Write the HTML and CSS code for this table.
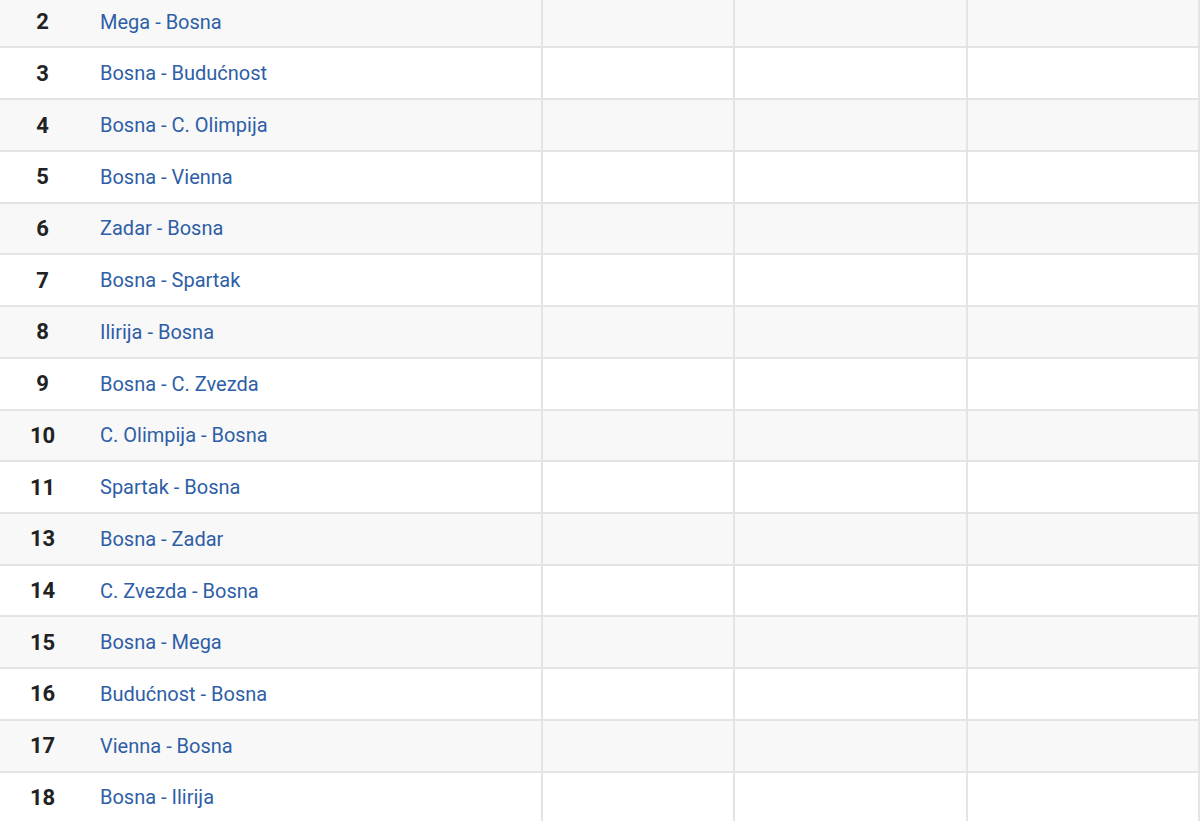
FILE: index.html
```html
<!DOCTYPE html>
<html lang="bs">
<head>
<meta charset="utf-8">
<title>Raspored</title>
<link rel="stylesheet" href="styles.css">
</head>
<body>
<table class="schedule">
  <colgroup>
    <col class="c-num"><col class="c-match"><col class="c-a"><col class="c-b"><col class="c-c">
  </colgroup>
  <tbody>
    <tr><td class="num">2</td><td class="match"><a href="#">Mega - Bosna</a></td><td class="cell"></td><td class="cell"></td><td class="cell"></td></tr>
    <tr><td class="num">3</td><td class="match"><a href="#">Bosna - Budućnost</a></td><td class="cell"></td><td class="cell"></td><td class="cell"></td></tr>
    <tr><td class="num">4</td><td class="match"><a href="#">Bosna - C. Olimpija</a></td><td class="cell"></td><td class="cell"></td><td class="cell"></td></tr>
    <tr><td class="num">5</td><td class="match"><a href="#">Bosna - Vienna</a></td><td class="cell"></td><td class="cell"></td><td class="cell"></td></tr>
    <tr><td class="num">6</td><td class="match"><a href="#">Zadar - Bosna</a></td><td class="cell"></td><td class="cell"></td><td class="cell"></td></tr>
    <tr><td class="num">7</td><td class="match"><a href="#">Bosna - Spartak</a></td><td class="cell"></td><td class="cell"></td><td class="cell"></td></tr>
    <tr><td class="num">8</td><td class="match"><a href="#">Ilirija - Bosna</a></td><td class="cell"></td><td class="cell"></td><td class="cell"></td></tr>
    <tr><td class="num">9</td><td class="match"><a href="#">Bosna - C. Zvezda</a></td><td class="cell"></td><td class="cell"></td><td class="cell"></td></tr>
    <tr><td class="num">10</td><td class="match"><a href="#">C. Olimpija - Bosna</a></td><td class="cell"></td><td class="cell"></td><td class="cell"></td></tr>
    <tr><td class="num">11</td><td class="match"><a href="#">Spartak - Bosna</a></td><td class="cell"></td><td class="cell"></td><td class="cell"></td></tr>
    <tr><td class="num">13</td><td class="match"><a href="#">Bosna - Zadar</a></td><td class="cell"></td><td class="cell"></td><td class="cell"></td></tr>
    <tr><td class="num">14</td><td class="match"><a href="#">C. Zvezda - Bosna</a></td><td class="cell"></td><td class="cell"></td><td class="cell"></td></tr>
    <tr><td class="num">15</td><td class="match"><a href="#">Bosna - Mega</a></td><td class="cell"></td><td class="cell"></td><td class="cell"></td></tr>
    <tr><td class="num">16</td><td class="match"><a href="#">Budućnost - Bosna</a></td><td class="cell"></td><td class="cell"></td><td class="cell"></td></tr>
    <tr><td class="num">17</td><td class="match"><a href="#">Vienna - Bosna</a></td><td class="cell"></td><td class="cell"></td><td class="cell"></td></tr>
    <tr><td class="num">18</td><td class="match"><a href="#">Bosna - Ilirija</a></td><td class="cell"></td><td class="cell"></td><td class="cell"></td></tr>
  </tbody>
</table>
</body>
</html>
```

FILE: styles.css
```css
html, body {
  margin: 0;
  padding: 0;
  background: #ffffff;
  overflow: hidden;
}

body {
  font-family: Roboto, "Liberation Sans", Arial, sans-serif;
}

.schedule {
  width: 1200px;
  margin-top: -3.25px;
  border-collapse: separate;
  border-spacing: 0;
  table-layout: fixed;
}

.c-num { width: 85px; }
.c-match { width: 456px; }
.c-a { width: 192px; }
.c-b { width: 233px; }
.c-c { width: 234px; }

.schedule td {
  height: 49.73px;
  padding: 0;
  border-bottom: 2px solid #e4e4e4;
  vertical-align: middle;
}

.schedule tr:nth-child(odd) td {
  background: #f8f8f8;
}

.schedule tr:nth-child(even) td {
  background: #ffffff;
}

.num {
  text-align: center;
  font-size: 22px;
  font-weight: 700;
  color: #222222;
}

.match {
  padding-left: 15px !important;
  font-size: 20px;
}

.match a {
  color: #2e5ea6;
  text-decoration: none;
}

.cell {
  border-left: 2px solid #e4e4e4;
}

.schedule td:last-child {
  border-right: 2px solid #e4e4e4;
}
```
